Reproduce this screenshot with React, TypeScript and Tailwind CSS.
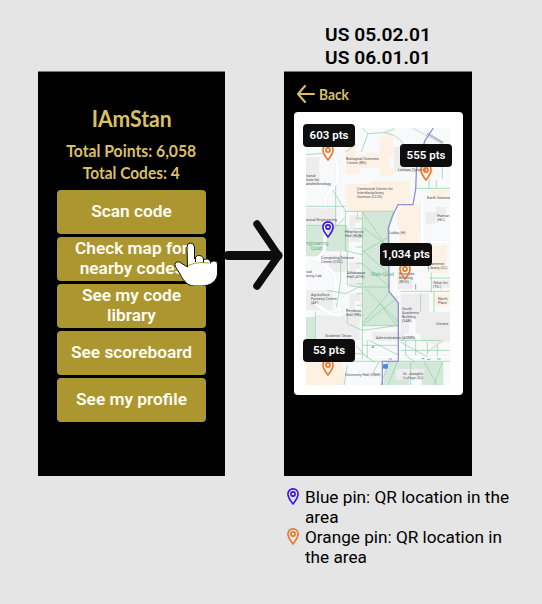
import type { ReactNode } from "react";

const BLUE = "#3b0df0";
const ORANGE = "#ee7428";

function Pin({ color, className = "" }: { color: string; className?: string }) {
  return (
    <svg viewBox="0 0 12 17" className={`h-[17px] w-3 ${className}`} fill="none" stroke={color} strokeWidth="1.6">
      <path d="M6 .9C3 .9.9 3.100.9 6c0 3.500 5.100 10 5.100 10s5.100-6.500 5.100-10C11.100 3.100 9 .9 6 .9Z" strokeLinejoin="round" />
      <circle cx="6" cy="6" r="2.100" />
    </svg>
  );
}

function Gold({ children, className = "" }: { children: ReactNode; className?: string }) {
  return (
    <div className={`whitespace-nowrap font-['Lato',sans-serif] font-bold text-[#d9c068] ${className}`}>{children}</div>
  );
}

function MenuButton({ children }: { children: ReactNode }) {
  return (
    <button className="flex h-11 w-[149px] items-center justify-center rounded bg-[#ac962f] pb-[2px] text-center text-[17.300px] font-semibold leading-5 text-[#fffdf3]">
      <span>{children}</span>
    </button>
  );
}

function PointTag({ children, className }: { children: ReactNode; className: string }) {
  return (
    <div className={`absolute flex h-[23px] w-[52px] items-center justify-center whitespace-nowrap rounded bg-[#0d0d0d] text-[11.500px] font-semibold text-white ${className}`}>
      {children}
    </div>
  );
}

const labels: [number, number, string][] = [
  [346, 160, "Biological Sciences"], [347, 164, "Centre (BS)"],
  [306, 177, "tional"], [306, 181, "itute for"], [306, 185, "anotechnology"],
  [357, 189.5, "Centennial Centre for"], [357, 193.5, "Interdisciplinary"], [357, 197.5, "Science (CCIS)"],
  [398, 171, "Lecture Theatres"], [427, 199, "Earth Science"],
  [306, 221, "anical Engineering"], [345, 233, "Heartlands"], [345, 237, "Hall (HUB)"],
  [321, 259, "Computing Science"], [321, 263, "Centre (CSC)"],
  [347, 274, "Athabasca"], [347, 278, "Hall (ATH)"],
  [306, 273, "ical"], [306, 277, "ering Lab"],
  [311, 296, "Agriculture"], [311, 300, "Forestry Centre"], [311, 304, "(AF)"],
  [346, 312, "Pembina"], [346, 316, "Hall (PE)"],
  [389, 234, "Lobby (H)"], [437, 217, "Human"], [437, 221, "(HC)"],
  [429, 265, "Cameron"], [428, 269, "Library (CL)"],
  [433, 284, "Telus Int"], [433, 288, "(TIL)"],
  [399, 275, "Business"], [399, 279, "Building"], [399, 283, "(BUS)"],
  [438, 300, "North"], [438, 304, "Plant"],
  [402, 310, "South"], [402, 314, "Academic"], [402, 318, "Building"], [402, 322, "(SAB)"],
  [436, 325, "Univers"], [325, 337, "Students' Union"], [376, 338.5, "Administration (ADMN)"],
  [345, 376, "University Hall (UNH)"], [403, 375, "St. Joseph's"], [403, 379, "College (SJ)"],
];

function CampusMap() {
  return (
    <svg viewBox="36 48 432 771" className="h-[257px] w-36">
      <path fill="#f8f9fb" d="M36 48h432v771H36z" />
      <path
        fill="#d3e8d8"
        d="M205 298h95l-15 40v200l28 35v68H205zM36 340h122l6 10v68h-72v14H36zM36 615h28v70H36zM275 750h173v69h-65l5-48h-75l-5 30h38v18h-78z"
      />
      <g fill="#fdf1e4">
        <path d="M155 98h30v32h32v-8h40V75h18V65h22v70h-12v30h12v27h-38v-24h-62v18h-42zM155 215h74v-8h118v68h-42v15H155zM322 278h60v75l-8 10v50h-58v-70l-8-5v-45h14zM412 400h46v84h-46zM36 750h105l10 30v39H36zM365 160h55v30h-55zM412 232h56v30h-56zM422 545h46v38h-46zM160 290h140v8H160z" />
      </g>
      <g fill="#ededee">
        <path d="M36 135h40v85H36zM36 288h90v50H36zM166 310h34v22h-18v30h18v28h-34zM105 430h57v50h-57zM166 450h34v22h-18v30h18v24h-34zM166 545h34v22h-18v30h18v24h-34zM62 610h135v75H62zM36 535h80v60H36zM310 480h45v52h-45zM320 545h85v120h-40v-45h-20v45h-25zM380 600h88v90h-30l-16 10-22-12-20 4zM412 505h56v22h-56zM235 660h96v26h-96zM305 772h85v32h-20v-12h-40v12h-25zM300 105h45v75h-45zM395 300h30v-15h30v30h-30v20h-30zM430 640h38v25h-38z" />
      </g>
      <g fill="none" stroke="#e6e9ef" strokeWidth="11" strokeLinejoin="round">
        <path d="M95 290v-35c8-22 38-30 36-62-2-38 5-62-32-66M36 440h35l50 45 12 85 5 40-30-4-45-32M385 270v120h83M36 735h432M95 340l-5 80-20 18" />
      </g>
      <g fill="none" stroke="#fff" strokeWidth="9" strokeLinejoin="round">
        <path d="M95 290v-35c8-22 38-30 36-62-2-38 5-62-32-66M36 440h35l50 45 12 85 5 40-30-4-45-32M385 270v120h83M36 735h432M95 340l-5 80-20 18" />
      </g>
      <path d="M355 48l113 60M400 66l50 26" fill="none" stroke="#d0d2d7" strokeWidth="3" />
      <path d="M400 64l46 28" fill="none" stroke="#9a9da4" strokeWidth="6" strokeDasharray="3 2" />
      <g fill="none" stroke="#96d1a3" strokeWidth="2.200">
        <path d="M205 48l17 17-20 55M222 65l48-3 32-12M270 62c28 2 50 18 64 42M36 128l50-4M116 234l38 62v20l-38 38M36 283h118M125 220v120M154 298h51M205 298v343h108V573l-28-35V338l15-40zM205 300l80 112M205 345l80 60M205 415l80 70M205 420l80-45M205 525h80M205 455l80 68M205 640l108-85M208 630l50-55 50 66M215 530l98 100M250 585l35-45M190 298v20M205 320h-20M205 350h-23M205 375h-23M205 405h-20M205 455h-18M205 485h-18M205 515h-18M205 545h-18M205 580h-18M205 610h-18M154 316v100l50 12M140 418v87l-12 80M160 418v100l45 10M36 340h120M100 535l55 10 50-25M64 600v82M160 590v45l45 20M205 641v100M205 655l105-14M220 685v50M205 700h106M225 685l90 45M320 685h120M320 715h148M335 685v45l28 20M365 685v45M400 690v40M430 700v35M320 690l80 45M448 685l-48 35M36 725h170l35 25M185 700l38 40M36 748h432M255 750l-20 35M365 229h103M405 200v29M427 205v24M412 482v60M320 538h148M380 545v55M385 400l20 80M405 498h63M420 540v60M313 600v90M285 750l-25 69M310 750l-28 69M390 750l40 69M445 750l-25 69M350 750v69M160 760l-10 59" />
        <path d="M335 175l35 5M445 150v50M156 120l30-25" />
      </g>
      <path d="M418 48l-25 38-25 75-3 70-8 47h-45l-15 30-14 40 2 190 28 35v175h-48v71" fill="none" stroke="#9691d6" strokeWidth="4" />
      <path d="M365 517v15M383 740h8M400 742h9M430 741h10M284 741h10" stroke="#9691d6" strokeWidth="3" />
      <rect x="267" y="756" width="15" height="14" rx="3" fill="#4b8be6" />
      <rect x="233" y="702" width="7" height="6" rx="1" fill="#86aeea" />
      <g transform="translate(-882 -336) scale(3)">
        <g fill="#4c5056" className="font-['Roboto',sans-serif] text-[3.800px]">
          {labels.map(([x, y, text]) => <text key={`${x}-${y}`} x={x} y={y}>{text}</text>)}
        </g>
        <g fill="#6ab27c" className="font-['Roboto',sans-serif] text-[4.800px]">
          <text x="306" y="245">ngineering</text>
          <text x="311" y="250">Quad</text>
          <text x="371" y="276">Main Quad</text>
        </g>
      </g>
    </svg>
  );
}

function Hand() {
  return (
    <svg viewBox="174 242 44 44" className="absolute left-[174px] top-[242px] h-11 w-11">
      <path d="M187 247q0-4 3.500-4t4 4v12q2-5 7-3 2 1 2 4 5-3 7 2 7-3 7 3v8c0 8-7 13-16 13h-7c-8 0-12-7-15-13l-4-6q-2-6 4-5l8 5Z" fill="#fff" stroke="#111" />
      <path d="M188 265.500q7-3 13-3l8 .5" fill="none" stroke="#ac962f" />
      <path d="M195.500 257v5M203.500 260v2.500M210.500 262v1.500" fill="none" stroke="#111" />
    </svg>
  );
}

function Legend({ color, children }: { color: string; children: ReactNode }) {
  return (
    <div className="flex h-10 gap-[6px] text-[17.200px] leading-5 text-black">
      <Pin color={color} className="mt-px shrink-0" />
      <p className="whitespace-nowrap">{children}</p>
    </div>
  );
}

export default function App() {
  return (
    <main className="relative flex h-[604px] w-[542px] overflow-hidden bg-[#e5e5e5] pl-[38px] font-['Roboto',sans-serif]">
      <section className="mt-[71px] flex h-[405px] w-[187px] shrink-0 flex-col items-center border-t border-[#777] bg-black">
        <Gold className="mt-[33px] scale-x-[.96] text-[22px] leading-[28px]">IAmStan</Gold>
        <Gold className="mt-[7px] scale-x-[.925] text-[17px] leading-[22px]">Total Points: 6,058</Gold>
        <Gold className="scale-x-[.91] text-[17px] leading-[22px]">Total Codes: 4</Gold>
        <div className="mt-[6px] flex flex-col gap-[3px]">
          <MenuButton>Scan code</MenuButton>
          <MenuButton>Check map for<br />nearby codes</MenuButton>
          <MenuButton>See my code<br />library</MenuButton>
          <MenuButton>See scoreboard</MenuButton>
          <MenuButton>See my profile</MenuButton>
        </div>
      </section>

      <section className="ml-[59px] w-[188px] shrink-0 pt-6">
        <h1 className="h-[47px] text-center text-[19.200px] font-semibold leading-[22.500px] text-black">US 05.02.01<br />US 06.01.01</h1>
        <div className="flex h-[405px] flex-col border-t border-[#777] bg-black">
          <div className="flex h-10 items-center pl-[13px] pt-[3px]">
            <svg viewBox="0 0 18 18" className="h-[18px] w-[18px]" fill="none" stroke="#d9c068" strokeWidth="2" strokeLinecap="round" strokeLinejoin="round">
              <path d="M17 9H1m7-8L1 9l7 8" />
            </svg>
            <Gold className="ml-1 origin-left scale-x-[.86] text-[16px]">Back</Gold>
          </div>
          <div className="ml-[10px] flex h-[283px] w-[169px] rounded bg-white pl-3 pt-4">
            <CampusMap />
          </div>
        </div>
        <div className="ml-[3px] mt-[11px]">
          <Legend color={BLUE}>Blue pin: QR location in the<br />area</Legend>
          <Legend color={ORANGE}>Orange pin: QR location in<br />the area</Legend>
        </div>
      </section>

      <Pin color={ORANGE} className="absolute left-[322px] top-[144px]" />
      <Pin color={ORANGE} className="absolute left-[420px] top-[164px]" />
      <Pin color={BLUE} className="absolute left-[322px] top-[221px]" />
      <Pin color={ORANGE} className="absolute left-[399px] top-[263px]" />
      <Pin color={ORANGE} className="absolute left-[322px] top-[359px]" />
      <PointTag className="left-[303px] top-[124px]">603 pts</PointTag>
      <PointTag className="left-[400px] top-[144px]">555 pts</PointTag>
      <PointTag className="left-[380px] top-[243px]">1,034 pts</PointTag>
      <PointTag className="left-[303px] top-[339px]">53 pts</PointTag>

      <svg viewBox="222 216 64 78" className="absolute left-[222px] top-[216px] h-[78px] w-16" fill="none" stroke="#0d0d0d" strokeLinecap="round" strokeLinejoin="round">
        <path d="M228 255.500h50" strokeWidth="9" />
        <path d="M257 224l21.500 31.500L257 286" strokeWidth="7.500" />
      </svg>
      <Hand />
    </main>
  );
}
